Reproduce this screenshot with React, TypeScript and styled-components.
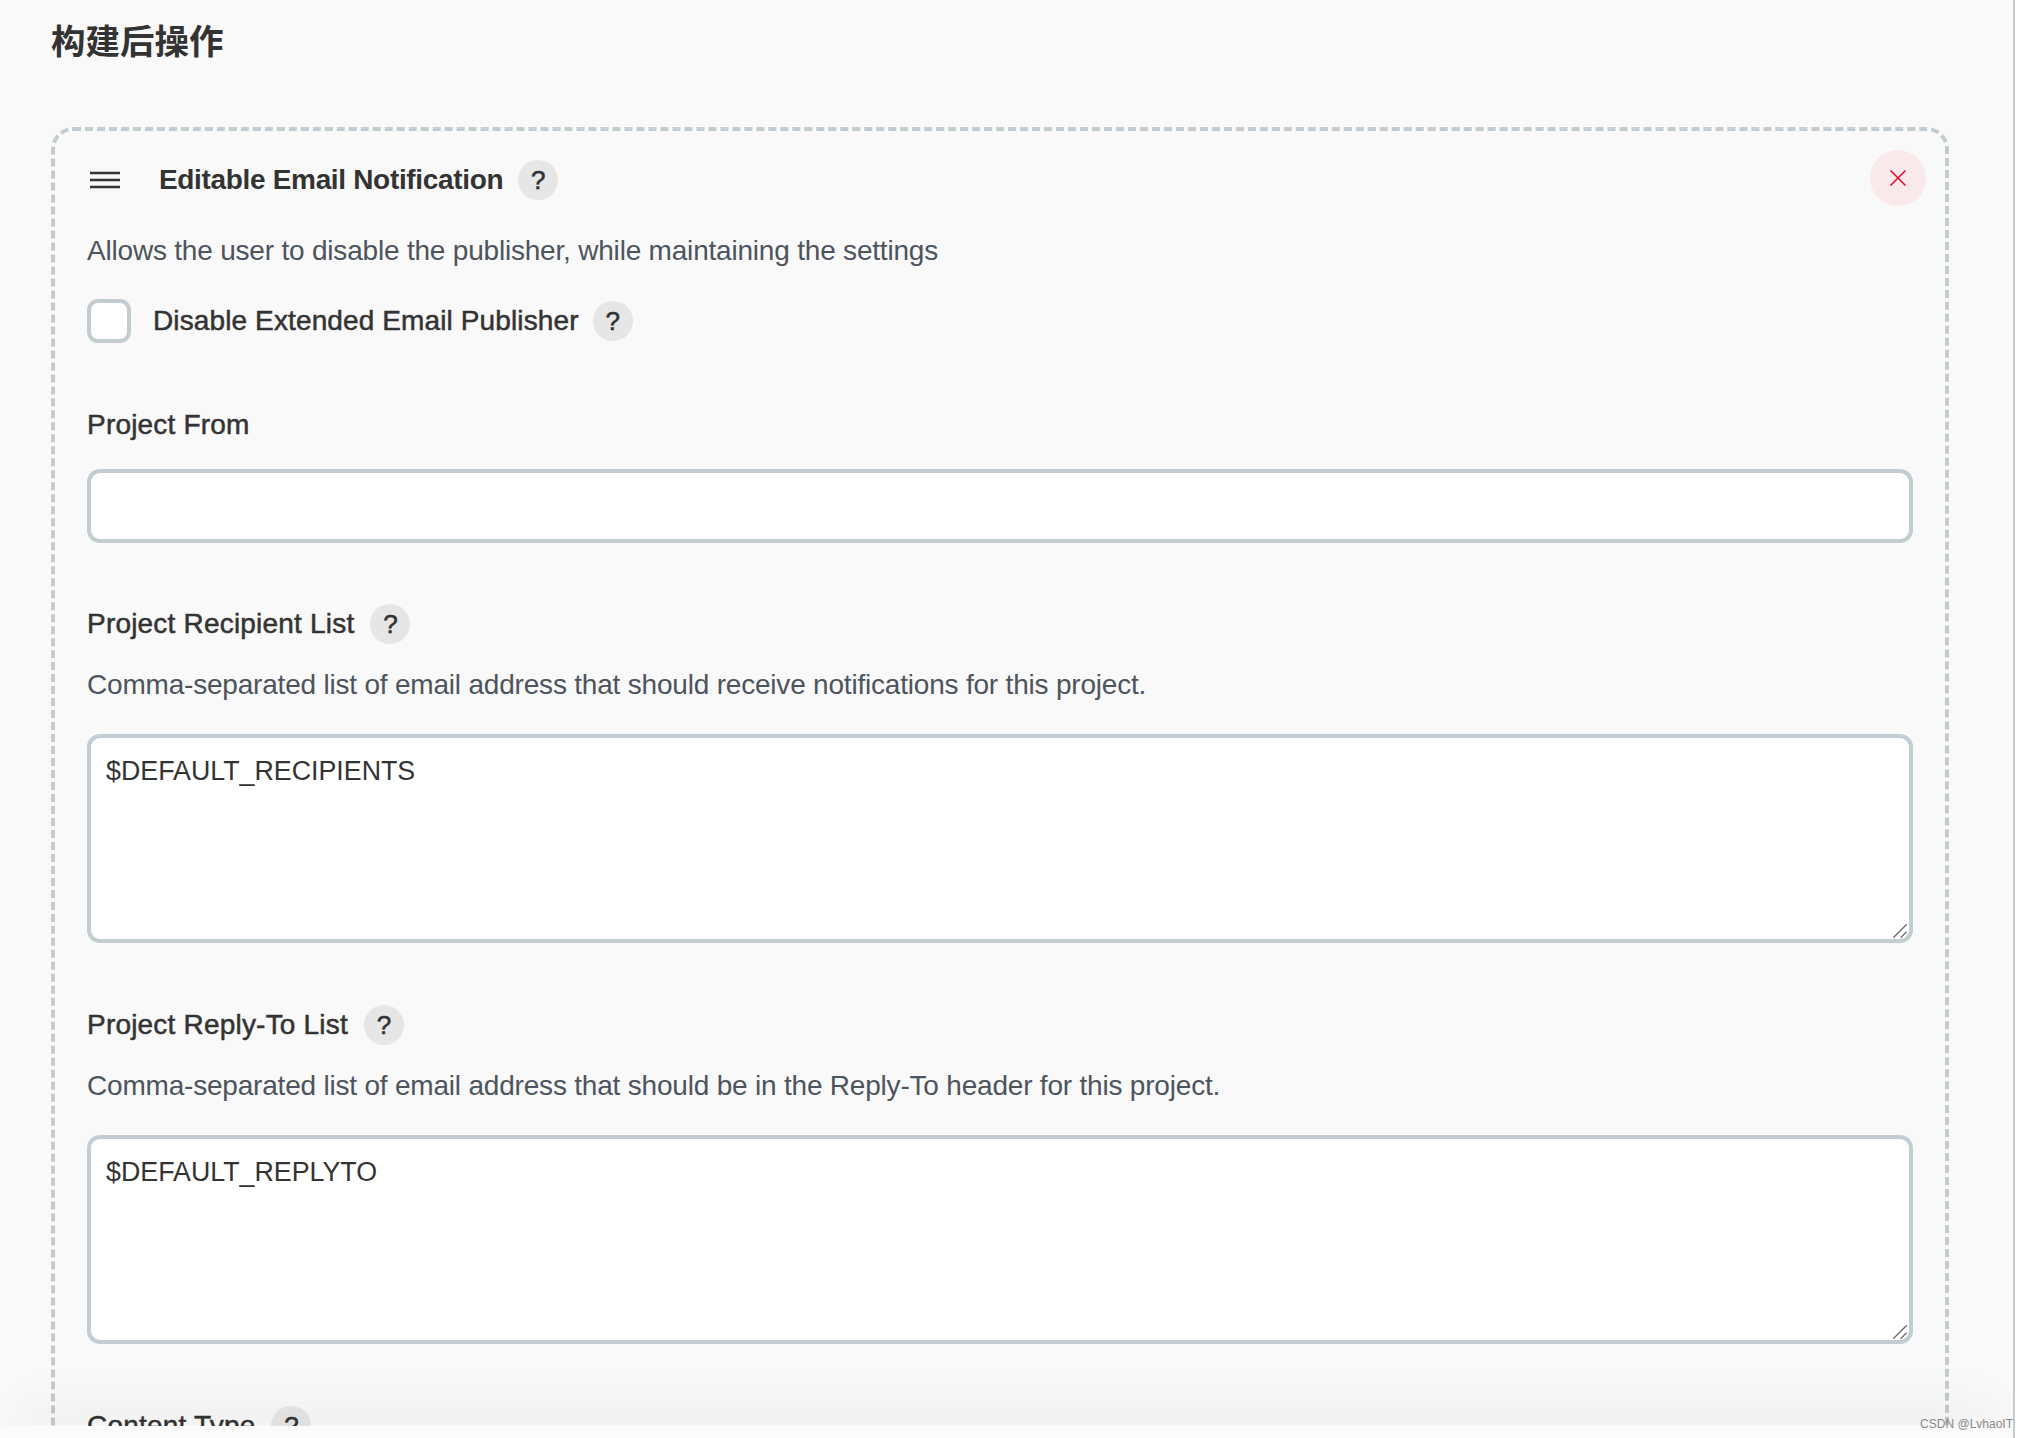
import styled, { createGlobalStyle } from "styled-components"

const GlobalStyle = createGlobalStyle`
    html, body {
        margin:0;
        padding:0;
        background-color:#ffffff;
        font-family:"Liberation Sans", Arial, sans-serif;
    }
    #root {
        height:1438px;
        overflow:hidden;
        position:relative;
    }
`

const Page = styled.div`
    width:2015px;
    height:1438px;
    box-sizing:border-box;
    padding:12px 0 0 51px;
    background-color:#f9f9f9;
    border-right:2px solid #c3ccd1;
    overflow:hidden;
`

const SectionTitle = styled.h2`
    margin:0 0 55px 0;
    height:60px;
    line-height:60px;
    font-family:"Liberation Sans", "Noto Sans CJK SC", sans-serif;
    font-size:34.5px;
    font-weight:700;
    color:#333333;
`

const Card = styled.div`
    position:relative;
    width:1898px;
    box-sizing:border-box;
    padding:27px 32px 0 32px;
    border:4px dashed #c3ccd1;
    border-radius:22px;
`

const RemoveButton = styled.button`
    position:absolute;
    top:19px;
    right:19px;
    width:56px;
    height:56px;
    padding:0;
    border:none;
    border-radius:50%;
    background-color:#f9e9ea;
    display:flex;
    align-items:center;
    justify-content:center;
`

const HeaderRow = styled.div`
    display:flex;
    align-items:center;
    height:44px;
    padding-left:3px;
`

const DragHandle = styled.svg`
    width:30px;
    height:20px;
    margin-right:39px;
    flex-shrink:0;
`

const CardTitle = styled.div`
    font-size:28px;
    font-weight:700;
    letter-spacing:-0.33px;
    color:#333333;
    margin-right:15px;
`

const HelpBadge = styled.span`
    width:40px;
    height:40px;
    border-radius:50%;
    background-color:#e6e6e6;
    color:#333333;
    font-size:26px;
    font-weight:400;
    letter-spacing:0;
    -webkit-text-stroke:0.6px #333333;
    display:flex;
    align-items:center;
    justify-content:center;
    flex-shrink:0;
`

const Description = styled.div<{ top?: number }>`
    margin-top:${({ top }) => top ?? 24}px;
    height:34px;
    line-height:34px;
    font-size:28px;
    letter-spacing:-0.2px;
    color:#4d545d;
`

const CheckRow = styled.div`
    display:flex;
    align-items:center;
    height:44px;
    margin-top:31px;
`

const CheckBox = styled.span`
    width:44px;
    height:44px;
    box-sizing:border-box;
    border:4px solid #c3ccd1;
    border-radius:11px;
    background-color:#ffffff;
    margin-right:22px;
    flex-shrink:0;
`

const FieldLabel = styled.div<{ top?: number }>`
    display:flex;
    align-items:center;
    height:40px;
    margin-top:${({ top }) => top ?? 62}px;
    gap:16px;
    font-size:28px;
    letter-spacing:0.2px;
    color:#333333;
    -webkit-text-stroke:0.5px #333333;
`

const CheckLabel = styled.span`
    font-size:28px;
    letter-spacing:0.12px;
    color:#333333;
    -webkit-text-stroke:0.5px #333333;
    margin-right:14px;
`

const TextInput = styled.input`
    display:block;
    width:100%;
    height:74px;
    margin-top:24px;
    box-sizing:border-box;
    border:4px solid #c3ccd1;
    border-radius:13px;
    background-color:#ffffff;
    outline:none;
`

const AreaWrap = styled.div`
    position:relative;
    margin-top:32px;
`

const TextArea = styled.textarea`
    display:block;
    width:100%;
    height:209px;
    padding:16px 15px;
    box-sizing:border-box;
    border:4px solid #c3ccd1;
    border-radius:13px;
    background-color:#ffffff;
    outline:none;
    resize:none;
    font-family:"Liberation Sans", Arial, sans-serif;
    font-size:26.8px;
    line-height:34px;
    color:#333333;
`

const ResizeGrip = styled.svg`
    position:absolute;
    right:6px;
    bottom:5px;
    width:14px;
    height:14px;
`

const BarShadow = styled.div`
    position:absolute;
    left:30px;
    top:1425px;
    width:1955px;
    height:1px;
    box-shadow:0 0 56px 8px rgba(0, 0, 0, 0.11);
    clip-path:inset(-100px -28px 0 -100px);
`

const StickyBar = styled.div`
    position:absolute;
    left:0;
    top:1426px;
    width:2013px;
    height:12px;
    background-color:#fbfbfb;
`

const Watermark = styled.span`
    position:absolute;
    right:15px;
    top:1416px;
    font-size:12px;
    line-height:16px;
    color:#8a8a8a;
`

const Help = () => <HelpBadge>?</HelpBadge>

const Area = ({ value }: { value: string }) => (
    <AreaWrap>
        <TextArea defaultValue={value} />
        <ResizeGrip viewBox="0 0 14 14">
            <path d="M0.3 13.7 L13.7 0.3 M7.7 13.7 L13.7 7.7" stroke="#666666" strokeWidth="1.3" fill="none" />
        </ResizeGrip>
    </AreaWrap>
)

const App = () => {
    return (
        <>
            <GlobalStyle />
            <Page>
                <SectionTitle>构建后操作</SectionTitle>
                <Card>
                    <RemoveButton aria-label="Remove">
                        <svg width="16" height="16" viewBox="0 0 16 16">
                            <path d="M0.5 0.5 L15.5 15.5 M15.5 0.5 L0.5 15.5" stroke="#e5062a" strokeWidth="1.5" fill="none" />
                        </svg>
                    </RemoveButton>
                    <HeaderRow>
                        <DragHandle viewBox="0 0 30 20">
                            <path d="M0 3 H30 M0 10 H30 M0 17 H30" stroke="#333333" strokeWidth="2.6" fill="none" />
                        </DragHandle>
                        <CardTitle>Editable Email Notification</CardTitle>
                        <Help />
                    </HeaderRow>
                    <Description top={32}>Allows the user to disable the publisher, while maintaining the settings</Description>
                    <CheckRow>
                        <CheckBox />
                        <CheckLabel>Disable Extended Email Publisher</CheckLabel>
                        <Help />
                    </CheckRow>

                    <FieldLabel top={62}>Project From</FieldLabel>
                    <TextInput type="text" />

                    <FieldLabel top={61}>Project Recipient List <Help /></FieldLabel>
                    <Description>Comma-separated list of email address that should receive notifications for this project.</Description>
                    <Area value="$DEFAULT_RECIPIENTS" />

                    <FieldLabel>Project Reply-To List <Help /></FieldLabel>
                    <Description>Comma-separated list of email address that should be in the Reply-To header for this project.</Description>
                    <Area value="$DEFAULT_REPLYTO" />

                    <FieldLabel>Content Type <Help /></FieldLabel>
                </Card>
            </Page>
            <BarShadow />
            <StickyBar />
            <Watermark>CSDN @LvhaoIT</Watermark>
        </>
    )
}

export default App
